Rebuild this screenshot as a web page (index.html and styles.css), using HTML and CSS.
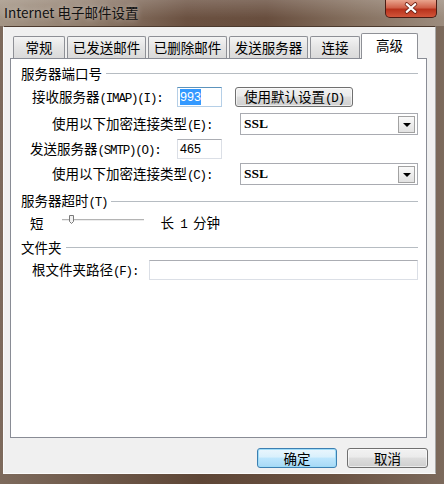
FILE: index.html
```html
<!DOCTYPE html>
<html lang="zh-CN">
<head>
    <meta charset="UTF-8">
    <title>Internet 电子邮件设置</title>
    <link rel="stylesheet" href="styles.css">
</head>
<body>
    <div class="window">
        <!-- Title bar -->
        <div class="titlebar">
            <span class="title">Internet 电子邮件设置</span>
            <div class="close">
                <svg width="52" height="18" viewBox="0 0 52 18">
                    <path d="M21.5 5 L30.5 13 M30.5 5 L21.5 13" stroke="#6b1e12" stroke-width="4" stroke-linecap="round"/>
                    <path d="M21.5 5 L30.5 13 M30.5 5 L21.5 13" stroke="#fff" stroke-width="2.2" stroke-linecap="round"/>
                </svg>
            </div>
        </div>

        <div class="frame">
            <div class="client">
                <!-- Tabs -->
                <div class="tabs">
                    <div class="tab w52">常规</div>
                    <div class="tab w79">已发送邮件</div>
                    <div class="tab w79">已删除邮件</div>
                    <div class="tab w79">发送服务器</div>
                    <div class="tab w50">连接</div>
                    <div class="tab active">高级</div>
                </div>

                <div class="panel">
                    <div class="group"><span>服务器端口号</span><i class="rule"></i></div>

                    <div class="row r-imap">
                        <span class="lbl l-imap">接收服务器<span class="a">(IMAP)(I):</span></span>
                        <div class="edit focus"><span class="hl">993</span></div>
                        <button class="btn btn-default">使用默认设置<span class="a">(D)</span></button>
                    </div>
                    <div class="row r-enc">
                        <span class="lbl l-enc">使用以下加密连接类型<span class="a">(E):</span></span>
                        <div class="combo"><span class="combo-text">SSL</span><span class="drop"></span></div>
                    </div>
                    <div class="row r-smtp">
                        <span class="lbl l-smtp">发送服务器<span class="a">(SMTP)(O):</span></span>
                        <div class="edit">465</div>
                    </div>
                    <div class="row r-enc2">
                        <span class="lbl l-enc">使用以下加密连接类型<span class="a">(C):</span></span>
                        <div class="combo"><span class="combo-text">SSL</span><span class="drop"></span></div>
                    </div>

                    <div class="group g2"><span>服务器超时<span class="a">(T)</span></span><i class="rule"></i></div>

                    <div class="row r-slider">
                        <span>短</span>
                        <svg class="slider" width="84" height="20" viewBox="0 0 84 20">
                            <line x1="1" y1="6.5" x2="83" y2="6.5" stroke="#b4b4b4" stroke-width="1"/>
                            <line x1="1" y1="7.5" x2="83" y2="7.5" stroke="#ececec" stroke-width="1"/>
                            <path d="M8.5 2.5 H12.5 V8.5 L10.5 10.5 L8.5 8.5 Z" fill="#f2f2f2" stroke="#7a7a7a" stroke-width="1"/>
                        </svg>
                        <span class="long">长<span class="a"> 1 </span>分钟</span>
                    </div>

                    <div class="group g3"><span>文件夹</span><i class="rule"></i></div>

                    <div class="row r-root">
                        <span class="lbl l-root">根文件夹路径<span class="a">(F):</span></span>
                        <div class="edit wide"></div>
                    </div>
                </div>

                <div class="actions">
                    <button class="btn btn-ok">确定</button>
                    <button class="btn btn-cancel">取消</button>
                </div>
            </div>
        </div>
    </div>
</body>
</html>
```

FILE: styles.css
```css
body {
    margin: 0;
    font-family: "Noto Sans CJK SC", "Noto Sans", sans-serif;
    font-size: 13.5px;
    color: #000;
}
.window {
    width: 444px;
    height: 484px;
    display: flex;
    flex-direction: column;
    background: linear-gradient(to right, #7d6a5c 0%, #5e4636 45%, #6a5242 75%, #7c6a5c 100%);
}
.titlebar {
    height: 26px;
    display: flex;
    justify-content: space-between;
    align-items: flex-start;
    background:
        linear-gradient(to bottom, rgba(255, 255, 255, 0.18), rgba(255, 255, 255, 0) 70%),
        linear-gradient(to right, #a39484 0%, #8f7c6c 20%, #6b5141 42%, #684e3e 60%, #85705f 80%, #9c8c7e 100%);
}
.title {
    padding: 3px 0 0 4px;
    line-height: 18px;
    color: #111;
    text-shadow: 0 0 6px rgba(255, 255, 255, 0.55);
}
.close {
    margin-right: 7px;
    width: 52px;
    height: 18px;
    box-sizing: border-box;
    border: 1px solid #4a1c14;
    border-top: none;
    border-radius: 0 0 5px 5px;
    background: linear-gradient(to bottom, #e9a48e 0%, #d0614a 45%, #b8321c 55%, #d2553a 100%);
    display: flex;
    align-items: center;
    justify-content: center;
}
.close svg {
    display: block;
    margin-top: -1px;
}
.frame {
    flex: 1;
    display: flex;
    padding: 0 8px 10px 3px;
}
.client {
    flex: 1;
    display: flex;
    flex-direction: column;
    background: #f0f0f0;
    border-top: 1px solid #4c3a2e;
    border-left: 1px solid #fbfbfb;
    border-right: 1px solid #a8a8a8;
    border-bottom: 1px solid #fbfbfb;
    padding: 6px 8px 5px 6px;
}

/* tabs */
.tabs {
    height: 25px;
    display: flex;
    align-items: flex-end;
    gap: 2px;
    padding-left: 3px;
}
.tab {
    height: 22px;
    box-sizing: border-box;
    border: 1px solid #8e9096;
    border-bottom: none;
    border-radius: 2px 2px 0 0;
    background: linear-gradient(to bottom, #f4f4f4, #e4e4e4 50%, #dadada);
    line-height: 20px;
    text-align: center;
}
.w52 { width: 52px; }
.w79 { width: 79px; }
.w50 { width: 50px; }
.tab.active {
    width: 57px;
    height: 26px;
    margin-bottom: -1px;
    margin-left: -1px;
    background: #fff;
    line-height: 22px;
    position: relative;
    z-index: 1;
}

.panel {
    height: 380px;
    box-sizing: border-box;
    border: 1px solid #898c95;
    background: #fff;
    padding: 5px 8px 0 10px;
    display: flex;
    flex-direction: column;
}
.group {
    height: 18px;
    display: flex;
    align-items: center;
    gap: 4px;
    line-height: 18px;
}
.group .rule {
    flex: 1;
    height: 0;
    border-top: 1px solid #b6bcc2;
    margin-top: 1px;
}
.g2 { margin-top: 6px; }
.g3 { margin-top: 5px; }

/* latin parts of the labels: narrow mono like the dialog font */
.a {
    font-family: "Liberation Mono", monospace;
    font-size: 12.5px;
    letter-spacing: -1.2px;
}

.row {
    display: flex;
    align-items: center;
    line-height: 18px;
}
.r-imap { height: 22px; margin-top: 4px; padding-left: 11px; }
.r-enc { height: 24px; margin-top: 4px; padding-left: 31px; }
.r-smtp { height: 22px; margin-top: 2px; padding-left: 9px; }
.r-enc2 { height: 24px; margin-top: 2px; padding-left: 31px; }
.r-slider { height: 20px; margin-top: 3px; padding-left: 9px; }
.r-root { height: 22px; margin-top: 3px; padding-left: 11px; }

.lbl { flex-shrink: 0; white-space: nowrap; }
.l-imap { width: 145px; }
.l-enc { width: 188px; }
.l-smtp { width: 147px; }
.l-root { width: 117px; }

.edit {
    width: 45px;
    height: 20px;
    box-sizing: border-box;
    border: 1px solid #dbdfe6;
    border-top-color: #abadb3;
    background: #fff;
    padding-left: 2px;
    font-family: "Liberation Sans", sans-serif;
    font-size: 12.5px;
    line-height: 18px;
}
.edit.focus {
    border-color: #b5cfe7;
    border-top-color: #5c93bc;
}
.edit.wide { flex: 1; }
.hl {
    background: #3399ff;
    color: #fff;
    padding: 1px 0;
}

.combo {
    width: 178px;
    height: 22px;
    box-sizing: border-box;
    border: 1px solid #a9abb1;
    background: #fff;
    display: flex;
    align-items: center;
    padding: 0 2px 0 3px;
}
.combo-text {
    font-family: "Liberation Serif", serif;
    font-size: 13.5px;
    font-weight: bold;
}
.drop {
    margin-left: auto;
    width: 17px;
    height: 17px;
    box-sizing: border-box;
    border: 1px solid #a2a2a2;
    background: linear-gradient(to bottom, #fafafa, #e2e2e2);
    display: flex;
    align-items: center;
    justify-content: center;
}
.drop::after {
    content: "";
    border-left: 4px solid transparent;
    border-right: 4px solid transparent;
    border-top: 4px solid #000;
    margin-top: 2px;
}

.slider {
    display: block;
    margin-left: 17px;
}
.long { margin-left: 16px; }

.btn {
    height: 20px;
    box-sizing: border-box;
    padding: 0;
    font: inherit;
    line-height: 17px;
    color: #000;
    border: 1px solid #707070;
    border-radius: 3px;
    background: linear-gradient(to bottom, #f2f2f2 0%, #ebebeb 45%, #dddddd 50%, #cfcfcf 100%);
    box-shadow: inset 0 0 0 1px rgba(255, 255, 255, 0.6);
}
.btn-default {
    width: 118px;
    margin-left: 13px;
}
.actions {
    display: flex;
    justify-content: flex-end;
    gap: 10px;
    margin-top: 10px;
    margin-right: -1px;
}
.btn-ok {
    width: 80px;
    border-color: #3c7fb1;
    background: linear-gradient(to bottom, #eaf6fd 0%, #d9f0fc 45%, #bee6fd 50%, #a7d9f5 100%);
    box-shadow: inset 0 0 0 1px #9fdcf8;
}
.btn-cancel { width: 81px; }
```
